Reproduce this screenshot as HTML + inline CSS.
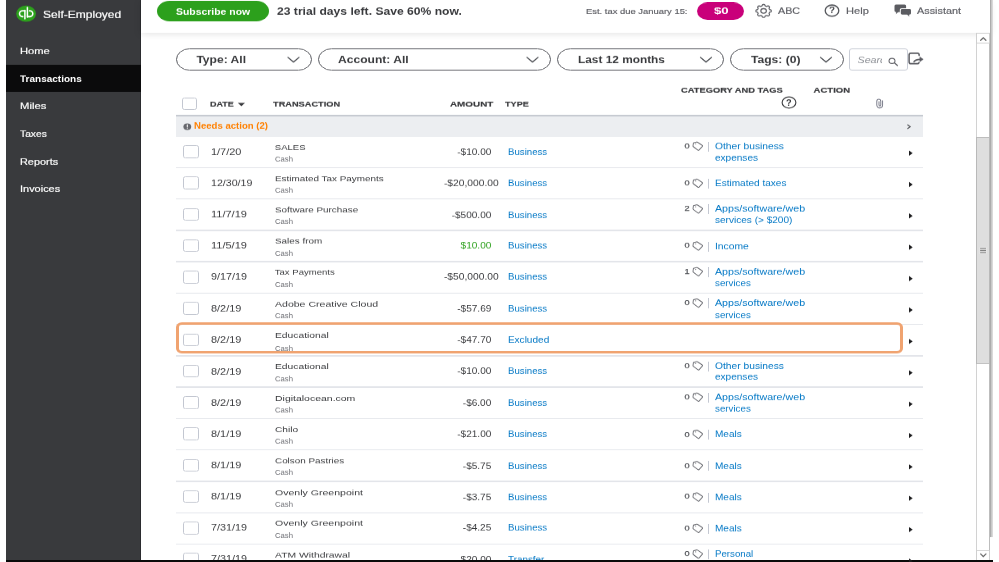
<!DOCTYPE html>
<html lang="en"><head><meta charset="utf-8"><title>Transactions - QuickBooks Self-Employed</title>
<style>
html,body{margin:0;padding:0;background:#fff;}
body{width:999px;height:562px;overflow:hidden;position:relative;font-family:"Liberation Sans",sans-serif;}
#root{will-change:transform;position:absolute;left:0;top:0;width:999px;height:685.37px;transform:scaleY(0.82);transform-origin:0 0;}
#root div{position:absolute;}
#root .t{white-space:nowrap;line-height:1;color:#393a3d;}
#root svg{position:absolute;left:0;top:0;width:999px;height:685.37px;overflow:visible;}
</style></head>
<body>
<div id="root">
<div style="left:6px;top:0px;width:135px;height:683.66px;background:#393a3d;border-right:1px solid #2b2c2f;box-sizing:border-box;"></div>
<div style="left:6px;top:78.54px;width:135px;height:33.66px;background:#0b0b0c;"></div>
<div style="left:141px;top:0px;width:849px;height:39.76px;background:#fff;box-shadow:0 2px 8px rgba(0,0,0,.11);"></div>
<div class="t" style="top:12px;font-size:12.6px;left:42.5px;color:#fff;-webkit-text-stroke:0.22px #fff;transform:scaleX(0.955);transform-origin:left 50%;">Self-Employed</div>
<div class="t" style="top:56px;font-size:11.75px;left:19.8px;color:#fff;-webkit-text-stroke:0.22px #fff;transform:scaleX(0.951);transform-origin:left 50%;">Home</div>
<div class="t" style="top:90px;font-size:11.75px;left:19.8px;font-weight:700;color:#fff;transform:scaleX(0.852);transform-origin:left 50%;">Transactions</div>
<div class="t" style="top:123px;font-size:11.75px;left:19.8px;color:#fff;-webkit-text-stroke:0.22px #fff;transform:scaleX(0.959);transform-origin:left 50%;">Miles</div>
<div class="t" style="top:157px;font-size:11.75px;left:19.8px;color:#fff;-webkit-text-stroke:0.22px #fff;transform:scaleX(0.873);transform-origin:left 50%;">Taxes</div>
<div class="t" style="top:191px;font-size:11.75px;left:19.8px;color:#fff;-webkit-text-stroke:0.22px #fff;transform:scaleX(0.926);transform-origin:left 50%;">Reports</div>
<div class="t" style="top:224px;font-size:11.75px;left:19.8px;color:#fff;-webkit-text-stroke:0.22px #fff;transform:scaleX(0.932);transform-origin:left 50%;">Invoices</div>
<div style="left:157px;top:1.22px;width:112px;height:24.39px;background:#2ca01c;border-radius:999px;"></div>
<div class="t" style="top:9px;font-size:11.41px;left:175.8px;font-weight:700;color:#fff;transform:scaleX(0.914);transform-origin:left 50%;">Subscribe now</div>
<div class="t" style="top:8px;font-size:12.43px;left:277px;font-weight:700;transform:scaleX(0.976);transform-origin:left 50%;">23 trial days left. Save 60% now.</div>
<div class="t" style="top:9px;font-size:9.88px;left:585.6px;color:#5d5e64;-webkit-text-stroke:0.2px #5d5e64;transform:scaleX(0.953);transform-origin:left 50%;">Est. tax due January 15:</div>
<div style="left:696.8px;top:2.68px;width:47px;height:21.22px;background:#c9007a;border-radius:999px;"></div>
<div class="t" style="top:8px;font-size:11.24px;left:713.5px;font-weight:700;color:#fff;transform:scaleX(1.176);transform-origin:left 50%;">$0</div>
<div class="t" style="top:8px;font-size:11.07px;left:777.6px;color:#5d5e64;-webkit-text-stroke:0.2px #5d5e64;transform:scaleX(0.971);transform-origin:left 50%;">ABC</div>
<div class="t" style="top:8px;font-size:11.58px;left:846.2px;color:#5d5e64;-webkit-text-stroke:0.2px #5d5e64;transform:scaleX(0.957);transform-origin:left 50%;">Help</div>
<div class="t" style="top:8px;font-size:11.58px;left:917.4px;color:#5d5e64;-webkit-text-stroke:0.2px #5d5e64;transform:scaleX(0.936);transform-origin:left 50%;">Assistant</div>
<div class="t" style="top:7px;font-size:11.58px;left:829px;font-weight:700;color:#4a4b50;transform:scaleX(0.848);transform-origin:left 50%;">?</div>
<div style="left:175.6px;top:58.66px;width:136.7px;height:27.8px;border:1.6px solid #595a60;border-radius:999px;box-sizing:border-box;background:#fff;"></div>
<div class="t" style="top:67px;font-size:12.09px;left:196.4px;font-weight:700;">Type: All</div>
<div style="left:318px;top:58.66px;width:233.4px;height:27.8px;border:1.6px solid #595a60;border-radius:999px;box-sizing:border-box;background:#fff;"></div>
<div class="t" style="top:67px;font-size:12.09px;left:338px;font-weight:700;">Account: All</div>
<div style="left:556.8px;top:58.66px;width:167.2px;height:27.8px;border:1.6px solid #595a60;border-radius:999px;box-sizing:border-box;background:#fff;"></div>
<div class="t" style="top:67px;font-size:12.09px;left:578px;font-weight:700;transform:scaleX(0.981);transform-origin:left 50%;">Last 12 months</div>
<div style="left:730px;top:58.66px;width:114px;height:27.8px;border:1.6px solid #595a60;border-radius:999px;box-sizing:border-box;background:#fff;"></div>
<div class="t" style="top:67px;font-size:12.09px;left:751px;font-weight:700;">Tags: (0)</div>
<div style="left:849.2px;top:58.54px;width:59.3px;height:27.44px;border:1px solid #c9cdd6;border-radius:3px;box-sizing:border-box;background:#fff;"></div>
<div class="t" style="top:68px;font-size:10.7px;left:857.5px;font-style:italic;color:#8d9096;width:24.4px;overflow:hidden;">Search</div>
<div style="left:182px;top:119.39px;width:15.3px;height:14.76px;border:1px solid #c3c7d1;border-radius:2.5px;box-sizing:border-box;background:#fff;"></div>
<div class="t" style="top:122px;font-size:9.54px;left:209.5px;font-weight:700;-webkit-text-stroke:0.2px #393a3d;transform:scaleX(0.942);transform-origin:left 50%;">DATE</div>
<div class="t" style="top:122px;font-size:9.54px;left:273.3px;font-weight:700;-webkit-text-stroke:0.2px #393a3d;transform:scaleX(0.968);transform-origin:left 50%;">TRANSACTION</div>
<div class="t" style="top:122px;font-size:9.54px;left:450px;font-weight:700;-webkit-text-stroke:0.2px #393a3d;transform:scaleX(1.035);transform-origin:left 50%;">AMOUNT</div>
<div class="t" style="top:122px;font-size:9.54px;left:505.4px;font-weight:700;-webkit-text-stroke:0.2px #393a3d;transform:scaleX(0.955);transform-origin:left 50%;">TYPE</div>
<div class="t" style="top:105px;font-size:9.54px;left:681.4px;font-weight:700;-webkit-text-stroke:0.2px #393a3d;transform:scaleX(0.977);transform-origin:left 50%;">CATEGORY AND TAGS</div>
<div class="t" style="top:105px;font-size:9.54px;left:813.6px;font-weight:700;-webkit-text-stroke:0.2px #393a3d;">ACTION</div>
<div class="t" style="top:120px;font-size:11.24px;left:786.2px;font-weight:700;transform:scaleX(0.816);transform-origin:left 50%;">?</div>
<div style="left:175.8px;top:141.46px;width:747.2px;height:25.12px;background:#eceef1;"></div>
<div style="left:175.8px;top:140.12px;width:747.2px;height:1.95px;background:#c6cad1;"></div>
<div class="t" style="top:149px;font-size:10.05px;left:194px;font-weight:700;color:#ff8000;transform:scaleX(0.953);transform-origin:left 50%;">Needs action (2)</div>
<div style="left:175.8px;top:203.65px;width:747.2px;height:1.34px;background:#e3e5ea;"></div>
<div style="left:183.1px;top:176.98px;width:15.7px;height:15.61px;border:1px solid #c3c7d1;border-radius:2.5px;box-sizing:border-box;background:#fff;"></div>
<div class="t" style="top:181px;font-size:10.22px;left:211.2px;transform:scaleX(1.070);transform-origin:left 50%;">1/7/20</div>
<div class="t" style="top:175px;font-size:9.54px;left:274.8px;">SALES</div>
<div class="t" style="top:190px;font-size:8.52px;left:274.9px;color:#6b6c72;transform:scaleX(0.905);transform-origin:left 50%;">Cash</div>
<div class="t" style="top:181px;font-size:10.05px;right:507.7px;">-$10.00</div>
<div class="t" style="top:181px;font-size:10.05px;left:507.9px;color:#0077c5;transform:scaleX(0.961);transform-origin:left 50%;">Business</div>
<div class="t" style="top:174px;font-size:9.2px;left:684.4px;color:#4f5156;-webkit-text-stroke:0.25px #4f5156;">0</div>
<div style="left:708.1px;top:172.83px;width:0.9px;height:11.95px;background:#c4c8d2;"></div>
<div class="t" style="top:174px;font-size:10.05px;left:715px;color:#0077c5;transform:scaleX(1.021);transform-origin:left 50%;">Other business</div>
<div class="t" style="top:188px;font-size:10.05px;left:715px;color:#0077c5;">expenses</div>
<div style="left:175.8px;top:241.91px;width:747.2px;height:1.34px;background:#e3e5ea;"></div>
<div style="left:183.1px;top:215.24px;width:15.7px;height:15.61px;border:1px solid #c3c7d1;border-radius:2.5px;box-sizing:border-box;background:#fff;"></div>
<div class="t" style="top:219px;font-size:10.22px;left:211.2px;transform:scaleX(1.041);transform-origin:left 50%;">12/30/19</div>
<div class="t" style="top:213px;font-size:9.54px;left:274.8px;transform:scaleX(1.038);transform-origin:left 50%;">Estimated Tax Payments</div>
<div class="t" style="top:228px;font-size:8.52px;left:274.9px;color:#6b6c72;transform:scaleX(0.905);transform-origin:left 50%;">Cash</div>
<div class="t" style="top:219px;font-size:10.05px;right:500.2px;transform:scaleX(1.020);transform-origin:right 50%;">-$20,000.00</div>
<div class="t" style="top:219px;font-size:10.05px;left:507.9px;color:#0077c5;transform:scaleX(0.961);transform-origin:left 50%;">Business</div>
<div class="t" style="top:219px;font-size:9.2px;left:684.4px;color:#4f5156;-webkit-text-stroke:0.25px #4f5156;">0</div>
<div style="left:708.1px;top:218.04px;width:0.9px;height:11.95px;background:#c4c8d2;"></div>
<div class="t" style="top:219px;font-size:10.05px;left:715px;color:#0077c5;">Estimated taxes</div>
<div style="left:175.8px;top:280.18px;width:747.2px;height:1.34px;background:#e3e5ea;"></div>
<div style="left:183.1px;top:253.5px;width:15.7px;height:15.61px;border:1px solid #c3c7d1;border-radius:2.5px;box-sizing:border-box;background:#fff;"></div>
<div class="t" style="top:257px;font-size:10.22px;left:211.2px;transform:scaleX(1.077);transform-origin:left 50%;">11/7/19</div>
<div class="t" style="top:251px;font-size:9.54px;left:274.8px;transform:scaleX(1.032);transform-origin:left 50%;">Software Purchase</div>
<div class="t" style="top:266px;font-size:8.52px;left:274.9px;color:#6b6c72;transform:scaleX(0.905);transform-origin:left 50%;">Cash</div>
<div class="t" style="top:258px;font-size:10.05px;right:507.7px;">-$500.00</div>
<div class="t" style="top:258px;font-size:10.05px;left:507.9px;color:#0077c5;transform:scaleX(0.961);transform-origin:left 50%;">Business</div>
<div class="t" style="top:250px;font-size:9.2px;left:684.4px;color:#4f5156;-webkit-text-stroke:0.25px #4f5156;">2</div>
<div style="left:708.1px;top:249.35px;width:0.9px;height:11.95px;background:#c4c8d2;"></div>
<div class="t" style="top:250px;font-size:10.05px;left:715px;color:#0077c5;transform:scaleX(1.061);transform-origin:left 50%;">Apps/software/web</div>
<div class="t" style="top:264px;font-size:10.05px;left:715px;color:#0077c5;">services (&gt; $200)</div>
<div style="left:175.8px;top:318.44px;width:747.2px;height:1.34px;background:#e3e5ea;"></div>
<div style="left:183.1px;top:291.76px;width:15.7px;height:15.61px;border:1px solid #c3c7d1;border-radius:2.5px;box-sizing:border-box;background:#fff;"></div>
<div class="t" style="top:295px;font-size:10.22px;left:211.2px;transform:scaleX(1.077);transform-origin:left 50%;">11/5/19</div>
<div class="t" style="top:289px;font-size:9.54px;left:274.8px;transform:scaleX(1.035);transform-origin:left 50%;">Sales from</div>
<div class="t" style="top:305px;font-size:8.52px;left:274.9px;color:#6b6c72;transform:scaleX(0.905);transform-origin:left 50%;">Cash</div>
<div class="t" style="top:295px;font-size:10.05px;right:507.7px;color:#2ca01c;">$10.00</div>
<div class="t" style="top:295px;font-size:10.05px;left:507.9px;color:#0077c5;transform:scaleX(0.961);transform-origin:left 50%;">Business</div>
<div class="t" style="top:295px;font-size:9.2px;left:684.4px;color:#4f5156;-webkit-text-stroke:0.25px #4f5156;">0</div>
<div style="left:708.1px;top:294.57px;width:0.9px;height:11.95px;background:#c4c8d2;"></div>
<div class="t" style="top:296px;font-size:10.05px;left:715px;color:#0077c5;transform:scaleX(1.026);transform-origin:left 50%;">Income</div>
<div style="left:175.8px;top:356.7px;width:747.2px;height:1.34px;background:#e3e5ea;"></div>
<div style="left:183.1px;top:330.02px;width:15.7px;height:15.61px;border:1px solid #c3c7d1;border-radius:2.5px;box-sizing:border-box;background:#fff;"></div>
<div class="t" style="top:333px;font-size:10.22px;left:211.2px;transform:scaleX(1.053);transform-origin:left 50%;">9/17/19</div>
<div class="t" style="top:327px;font-size:9.54px;left:274.8px;">Tax Payments</div>
<div class="t" style="top:343px;font-size:8.52px;left:274.9px;color:#6b6c72;transform:scaleX(0.905);transform-origin:left 50%;">Cash</div>
<div class="t" style="top:333px;font-size:10.05px;right:500.2px;transform:scaleX(1.020);transform-origin:right 50%;">-$50,000.00</div>
<div class="t" style="top:333px;font-size:10.05px;left:507.9px;color:#0077c5;transform:scaleX(0.961);transform-origin:left 50%;">Business</div>
<div class="t" style="top:327px;font-size:9.2px;left:684.4px;color:#4f5156;-webkit-text-stroke:0.25px #4f5156;">1</div>
<div style="left:708.1px;top:325.88px;width:0.9px;height:11.95px;background:#c4c8d2;"></div>
<div class="t" style="top:327px;font-size:10.05px;left:715px;color:#0077c5;transform:scaleX(1.061);transform-origin:left 50%;">Apps/software/web</div>
<div class="t" style="top:341px;font-size:10.05px;left:715px;color:#0077c5;transform:scaleX(0.971);transform-origin:left 50%;">services</div>
<div style="left:175.8px;top:394.96px;width:747.2px;height:1.34px;background:#e3e5ea;"></div>
<div style="left:183.1px;top:368.29px;width:15.7px;height:15.61px;border:1px solid #c3c7d1;border-radius:2.5px;box-sizing:border-box;background:#fff;"></div>
<div class="t" style="top:372px;font-size:10.22px;left:211.2px;transform:scaleX(1.070);transform-origin:left 50%;">8/2/19</div>
<div class="t" style="top:366px;font-size:9.54px;left:274.8px;transform:scaleX(1.106);transform-origin:left 50%;">Adobe Creative Cloud</div>
<div class="t" style="top:381px;font-size:8.52px;left:274.9px;color:#6b6c72;transform:scaleX(0.905);transform-origin:left 50%;">Cash</div>
<div class="t" style="top:372px;font-size:10.05px;right:507.7px;">-$57.69</div>
<div class="t" style="top:372px;font-size:10.05px;left:507.9px;color:#0077c5;transform:scaleX(0.961);transform-origin:left 50%;">Business</div>
<div class="t" style="top:365px;font-size:9.2px;left:684.4px;color:#4f5156;-webkit-text-stroke:0.25px #4f5156;">0</div>
<div style="left:708.1px;top:364.14px;width:0.9px;height:11.95px;background:#c4c8d2;"></div>
<div class="t" style="top:365px;font-size:10.05px;left:715px;color:#0077c5;transform:scaleX(1.061);transform-origin:left 50%;">Apps/software/web</div>
<div class="t" style="top:380px;font-size:10.05px;left:715px;color:#0077c5;transform:scaleX(0.971);transform-origin:left 50%;">services</div>
<div style="left:175.8px;top:433.23px;width:747.2px;height:1.34px;background:#e3e5ea;"></div>
<div style="left:183.1px;top:406.55px;width:15.7px;height:15.61px;border:1px solid #c3c7d1;border-radius:2.5px;box-sizing:border-box;background:#fff;"></div>
<div class="t" style="top:410px;font-size:10.22px;left:211.2px;transform:scaleX(1.070);transform-origin:left 50%;">8/2/19</div>
<div class="t" style="top:404px;font-size:9.54px;left:274.8px;transform:scaleX(1.079);transform-origin:left 50%;">Educational</div>
<div class="t" style="top:421px;font-size:8.52px;left:274.9px;color:#6b6c72;transform:scaleX(0.905);transform-origin:left 50%;">Cash</div>
<div class="t" style="top:410px;font-size:10.05px;right:507.7px;">-$47.70</div>
<div class="t" style="top:410px;font-size:10.05px;left:507.9px;color:#0077c5;">Excluded</div>
<div style="left:175.8px;top:471.49px;width:747.2px;height:1.34px;background:#e3e5ea;"></div>
<div style="left:183.1px;top:444.81px;width:15.7px;height:15.61px;border:1px solid #c3c7d1;border-radius:2.5px;box-sizing:border-box;background:#fff;"></div>
<div class="t" style="top:449px;font-size:10.22px;left:211.2px;transform:scaleX(1.070);transform-origin:left 50%;">8/2/19</div>
<div class="t" style="top:442px;font-size:9.54px;left:274.8px;transform:scaleX(1.079);transform-origin:left 50%;">Educational</div>
<div class="t" style="top:458px;font-size:8.52px;left:274.9px;color:#6b6c72;transform:scaleX(0.905);transform-origin:left 50%;">Cash</div>
<div class="t" style="top:448px;font-size:10.05px;right:507.7px;">-$10.00</div>
<div class="t" style="top:448px;font-size:10.05px;left:507.9px;color:#0077c5;transform:scaleX(0.961);transform-origin:left 50%;">Business</div>
<div class="t" style="top:442px;font-size:9.2px;left:684.4px;color:#4f5156;-webkit-text-stroke:0.25px #4f5156;">0</div>
<div style="left:708.1px;top:440.66px;width:0.9px;height:11.95px;background:#c4c8d2;"></div>
<div class="t" style="top:442px;font-size:10.05px;left:715px;color:#0077c5;transform:scaleX(1.021);transform-origin:left 50%;">Other business</div>
<div class="t" style="top:455px;font-size:10.05px;left:715px;color:#0077c5;">expenses</div>
<div style="left:175.8px;top:509.75px;width:747.2px;height:1.34px;background:#e3e5ea;"></div>
<div style="left:183.1px;top:483.07px;width:15.7px;height:15.61px;border:1px solid #c3c7d1;border-radius:2.5px;box-sizing:border-box;background:#fff;"></div>
<div class="t" style="top:487px;font-size:10.22px;left:211.2px;transform:scaleX(1.070);transform-origin:left 50%;">8/2/19</div>
<div class="t" style="top:481px;font-size:9.54px;left:274.8px;transform:scaleX(1.099);transform-origin:left 50%;">Digitalocean.com</div>
<div class="t" style="top:496px;font-size:8.52px;left:274.9px;color:#6b6c72;transform:scaleX(0.905);transform-origin:left 50%;">Cash</div>
<div class="t" style="top:487px;font-size:10.05px;right:507.7px;">-$6.00</div>
<div class="t" style="top:487px;font-size:10.05px;left:507.9px;color:#0077c5;transform:scaleX(0.961);transform-origin:left 50%;">Business</div>
<div class="t" style="top:480px;font-size:9.2px;left:684.4px;color:#4f5156;-webkit-text-stroke:0.25px #4f5156;">0</div>
<div style="left:708.1px;top:478.93px;width:0.9px;height:11.95px;background:#c4c8d2;"></div>
<div class="t" style="top:480px;font-size:10.05px;left:715px;color:#0077c5;transform:scaleX(1.061);transform-origin:left 50%;">Apps/software/web</div>
<div class="t" style="top:494px;font-size:10.05px;left:715px;color:#0077c5;transform:scaleX(0.971);transform-origin:left 50%;">services</div>
<div style="left:175.8px;top:548.01px;width:747.2px;height:1.34px;background:#e3e5ea;"></div>
<div style="left:183.1px;top:521.34px;width:15.7px;height:15.61px;border:1px solid #c3c7d1;border-radius:2.5px;box-sizing:border-box;background:#fff;"></div>
<div class="t" style="top:525px;font-size:10.22px;left:211.2px;transform:scaleX(1.070);transform-origin:left 50%;">8/1/19</div>
<div class="t" style="top:519px;font-size:9.54px;left:274.8px;transform:scaleX(1.067);transform-origin:left 50%;">Chilo</div>
<div class="t" style="top:534px;font-size:8.52px;left:274.9px;color:#6b6c72;transform:scaleX(0.905);transform-origin:left 50%;">Cash</div>
<div class="t" style="top:525px;font-size:10.05px;right:507.7px;">-$21.00</div>
<div class="t" style="top:525px;font-size:10.05px;left:507.9px;color:#0077c5;transform:scaleX(0.961);transform-origin:left 50%;">Business</div>
<div class="t" style="top:526px;font-size:9.2px;left:684.4px;color:#4f5156;-webkit-text-stroke:0.25px #4f5156;">0</div>
<div style="left:708.1px;top:524.14px;width:0.9px;height:11.95px;background:#c4c8d2;"></div>
<div class="t" style="top:525px;font-size:10.05px;left:715px;color:#0077c5;">Meals</div>
<div style="left:175.8px;top:586.27px;width:747.2px;height:1.34px;background:#e3e5ea;"></div>
<div style="left:183.1px;top:559.6px;width:15.7px;height:15.61px;border:1px solid #c3c7d1;border-radius:2.5px;box-sizing:border-box;background:#fff;"></div>
<div class="t" style="top:563px;font-size:10.22px;left:211.2px;transform:scaleX(1.070);transform-origin:left 50%;">8/1/19</div>
<div class="t" style="top:557px;font-size:9.54px;left:274.8px;transform:scaleX(1.036);transform-origin:left 50%;">Colson Pastries</div>
<div class="t" style="top:572px;font-size:8.52px;left:274.9px;color:#6b6c72;transform:scaleX(0.905);transform-origin:left 50%;">Cash</div>
<div class="t" style="top:564px;font-size:10.05px;right:507.7px;">-$5.75</div>
<div class="t" style="top:564px;font-size:10.05px;left:507.9px;color:#0077c5;transform:scaleX(0.961);transform-origin:left 50%;">Business</div>
<div class="t" style="top:564px;font-size:9.2px;left:684.4px;color:#4f5156;-webkit-text-stroke:0.25px #4f5156;">0</div>
<div style="left:708.1px;top:562.4px;width:0.9px;height:11.95px;background:#c4c8d2;"></div>
<div class="t" style="top:564px;font-size:10.05px;left:715px;color:#0077c5;">Meals</div>
<div style="left:175.8px;top:624.54px;width:747.2px;height:1.34px;background:#e3e5ea;"></div>
<div style="left:183.1px;top:597.86px;width:15.7px;height:15.61px;border:1px solid #c3c7d1;border-radius:2.5px;box-sizing:border-box;background:#fff;"></div>
<div class="t" style="top:601px;font-size:10.22px;left:211.2px;transform:scaleX(1.070);transform-origin:left 50%;">8/1/19</div>
<div class="t" style="top:596px;font-size:9.54px;left:274.8px;transform:scaleX(1.107);transform-origin:left 50%;">Ovenly Greenpoint</div>
<div class="t" style="top:611px;font-size:8.52px;left:274.9px;color:#6b6c72;transform:scaleX(0.905);transform-origin:left 50%;">Cash</div>
<div class="t" style="top:602px;font-size:10.05px;right:507.7px;">-$3.75</div>
<div class="t" style="top:602px;font-size:10.05px;left:507.9px;color:#0077c5;transform:scaleX(0.961);transform-origin:left 50%;">Business</div>
<div class="t" style="top:601px;font-size:9.2px;left:684.4px;color:#4f5156;-webkit-text-stroke:0.25px #4f5156;">0</div>
<div style="left:708.1px;top:600.66px;width:0.9px;height:11.95px;background:#c4c8d2;"></div>
<div class="t" style="top:602px;font-size:10.05px;left:715px;color:#0077c5;">Meals</div>
<div style="left:175.8px;top:662.8px;width:747.2px;height:1.34px;background:#e3e5ea;"></div>
<div style="left:183.1px;top:636.12px;width:15.7px;height:15.61px;border:1px solid #c3c7d1;border-radius:2.5px;box-sizing:border-box;background:#fff;"></div>
<div class="t" style="top:639px;font-size:10.22px;left:211.2px;transform:scaleX(1.053);transform-origin:left 50%;">7/31/19</div>
<div class="t" style="top:633px;font-size:9.54px;left:274.8px;transform:scaleX(1.107);transform-origin:left 50%;">Ovenly Greenpoint</div>
<div class="t" style="top:649px;font-size:8.52px;left:274.9px;color:#6b6c72;transform:scaleX(0.905);transform-origin:left 50%;">Cash</div>
<div class="t" style="top:639px;font-size:10.05px;right:507.7px;">-$4.25</div>
<div class="t" style="top:639px;font-size:10.05px;left:507.9px;color:#0077c5;transform:scaleX(0.961);transform-origin:left 50%;">Business</div>
<div class="t" style="top:640px;font-size:9.2px;left:684.4px;color:#4f5156;-webkit-text-stroke:0.25px #4f5156;">0</div>
<div style="left:708.1px;top:638.93px;width:0.9px;height:11.95px;background:#c4c8d2;"></div>
<div class="t" style="top:640px;font-size:10.05px;left:715px;color:#0077c5;">Meals</div>
<div style="left:175.8px;top:701.06px;width:747.2px;height:1.34px;background:#e3e5ea;"></div>
<div style="left:183.1px;top:674.38px;width:15.7px;height:15.61px;border:1px solid #c3c7d1;border-radius:2.5px;box-sizing:border-box;background:#fff;"></div>
<div class="t" style="top:677px;font-size:10.22px;left:211.2px;transform:scaleX(1.053);transform-origin:left 50%;">7/31/19</div>
<div class="t" style="top:672px;font-size:9.54px;left:274.8px;transform:scaleX(1.086);transform-origin:left 50%;">ATM Withdrawal</div>
<div class="t" style="top:687px;font-size:8.52px;left:274.9px;color:#6b6c72;transform:scaleX(0.905);transform-origin:left 50%;">Cash</div>
<div class="t" style="top:678px;font-size:10.05px;right:507.7px;">-$20.00</div>
<div class="t" style="top:678px;font-size:10.05px;left:507.9px;color:#0077c5;transform:scaleX(0.980);transform-origin:left 50%;">Transfer</div>
<div class="t" style="top:671px;font-size:9.2px;left:684.4px;color:#4f5156;-webkit-text-stroke:0.25px #4f5156;">0</div>
<div style="left:708.1px;top:670.24px;width:0.9px;height:11.95px;background:#c4c8d2;"></div>
<div class="t" style="top:671px;font-size:10.05px;left:715px;color:#0077c5;transform:scaleX(0.963);transform-origin:left 50%;">Personal</div>
<div class="hl" style="left:176px;top:392.89px;width:727px;height:38.17px;border:3px solid #f0a370;border-radius:6px;box-sizing:border-box;"></div>
<div style="left:976.4px;top:40.24px;width:13.6px;height:643.41px;background:#fff;border-left:1px solid #d2d2d2;border-right:1px solid #bdbdbd;box-sizing:border-box;"></div>
<div style="left:976.4px;top:40.24px;width:13.6px;height:12.56px;border:1px solid #cfcfcf;box-sizing:border-box;background:#fff;"></div>
<div style="left:976.4px;top:671.22px;width:13.6px;height:12.44px;border:1px solid #cfcfcf;box-sizing:border-box;background:#fff;"></div>
<div style="left:976.4px;top:167.07px;width:13.6px;height:276.83px;background:#dedede;border:1px solid #b9b9b9;box-sizing:border-box;"></div>
<div style="left:989.6px;top:0px;width:3.4px;height:654.88px;background:linear-gradient(90deg,#9c9c9c,#c4c4c4 40%,#e2e2e2);"></div>
<div style="left:6px;top:683.17px;width:987px;height:2.8px;background:#0a0a0a;"></div>
<svg viewBox="0 0 999 562" preserveAspectRatio="none">
<ellipse cx="26.1" cy="13.7" rx="9.9" ry="8.1" fill="#2ca01c"/>
<g fill="none" stroke="#fff" stroke-width="1.5" stroke-linecap="round"><path d="M24.7 10.8 H22.5 a3 2.9 0 0 0 0 5.8 H22.8"/><path d="M24.9 10.4 V18.7"/><path d="M27.6 16.6 H29.8 a3 2.9 0 0 0 0 -5.8 H29.5"/><path d="M27.4 7.6 V17.0"/></g>
<path d="M771.30 10.90 L771.29 11.15 L771.25 11.40 L771.16 11.64 L770.91 11.86 L770.40 12.02 L769.88 12.15 L769.62 12.31 L769.48 12.49 L769.38 12.67 L769.29 12.86 L769.20 13.05 L769.11 13.23 L769.05 13.44 L769.11 13.71 L769.36 14.10 L769.58 14.51 L769.58 14.82 L769.44 15.04 L769.25 15.24 L769.04 15.43 L768.82 15.60 L768.58 15.75 L768.31 15.87 L767.95 15.87 L767.45 15.69 L766.98 15.48 L766.65 15.43 L766.41 15.48 L766.18 15.55 L765.96 15.63 L765.73 15.71 L765.51 15.79 L765.30 15.90 L765.11 16.12 L764.95 16.55 L764.76 16.97 L764.49 17.18 L764.20 17.26 L763.90 17.29 L763.60 17.30 L763.30 17.29 L763.00 17.26 L762.71 17.18 L762.44 16.97 L762.25 16.55 L762.09 16.12 L761.90 15.90 L761.69 15.79 L761.47 15.71 L761.24 15.63 L761.02 15.55 L760.79 15.48 L760.55 15.43 L760.22 15.48 L759.75 15.69 L759.25 15.87 L758.89 15.87 L758.62 15.75 L758.38 15.60 L758.16 15.43 L757.95 15.24 L757.76 15.04 L757.62 14.82 L757.62 14.51 L757.84 14.10 L758.09 13.71 L758.15 13.44 L758.09 13.23 L758.00 13.05 L757.91 12.86 L757.82 12.67 L757.72 12.49 L757.58 12.31 L757.32 12.15 L756.80 12.02 L756.29 11.86 L756.04 11.64 L755.95 11.40 L755.91 11.15 L755.90 10.90 L755.91 10.65 L755.95 10.40 L756.04 10.16 L756.29 9.94 L756.80 9.78 L757.32 9.65 L757.58 9.49 L757.72 9.31 L757.82 9.13 L757.91 8.94 L758.00 8.75 L758.09 8.57 L758.15 8.36 L758.09 8.09 L757.84 7.70 L757.62 7.29 L757.62 6.98 L757.76 6.76 L757.95 6.56 L758.16 6.37 L758.38 6.20 L758.62 6.05 L758.89 5.93 L759.25 5.93 L759.75 6.11 L760.22 6.32 L760.55 6.37 L760.79 6.32 L761.02 6.25 L761.24 6.17 L761.47 6.09 L761.69 6.01 L761.90 5.90 L762.09 5.68 L762.25 5.25 L762.44 4.83 L762.71 4.62 L763.00 4.54 L763.30 4.51 L763.60 4.50 L763.90 4.51 L764.20 4.54 L764.49 4.62 L764.76 4.83 L764.95 5.25 L765.11 5.68 L765.30 5.90 L765.51 6.01 L765.73 6.09 L765.96 6.17 L766.18 6.25 L766.41 6.32 L766.65 6.37 L766.98 6.32 L767.45 6.11 L767.95 5.93 L768.31 5.93 L768.58 6.05 L768.82 6.20 L769.04 6.37 L769.25 6.56 L769.44 6.76 L769.58 6.98 L769.58 7.29 L769.36 7.70 L769.11 8.09 L769.05 8.36 L769.11 8.57 L769.20 8.75 L769.29 8.94 L769.38 9.13 L769.48 9.31 L769.62 9.49 L769.88 9.65 L770.40 9.78 L770.91 9.94 L771.16 10.16 L771.25 10.40 L771.29 10.65 Z" fill="none" stroke="#5d5e64" stroke-width="1.1" stroke-linejoin="round"/>
<ellipse cx="763.6" cy="10.9" rx="2.8" ry="2.3" fill="none" stroke="#5d5e64" stroke-width="1.1"/>
<ellipse cx="832" cy="10.6" rx="6.8" ry="5.6" fill="none" stroke="#55575c" stroke-width="1.3"/>
<g fill="#5b5c61"><path d="M896 4.6 h8.6 a1.5 1.3 0 0 1 1.5 1.3 v2.2 h-4.4 a1.9 1.6 0 0 0 -1.9 1.6 v2.3 h-1.6 l-2.4 2.2 l0.5 -2.2 h-0.3 a1.5 1.3 0 0 1 -1.5 -1.3 v-4.8 a1.5 1.3 0 0 1 1.5 -1.3 z"/><path stroke="#fff" stroke-width="0.9" paint-order="stroke" d="M902.2 9 h7.4 a1.4 1.2 0 0 1 1.4 1.2 v3.2 a1.4 1.2 0 0 1 -1.4 1.2 h-0.6 l0.4 2 l-2.3 -2 h-4.9 a1.4 1.2 0 0 1 -1.4 -1.2 v-3.2 a1.4 1.2 0 0 1 1.4 -1.2 z"/></g>
<path d="M288.0 57.4 L293.5 62.0 L299.0 57.4" fill="none" stroke="#55575c" stroke-width="1.2" stroke-linecap="round" stroke-linejoin="round"/>
<path d="M527.0 57.4 L532.5 62.0 L538.0 57.4" fill="none" stroke="#55575c" stroke-width="1.2" stroke-linecap="round" stroke-linejoin="round"/>
<path d="M700.5 57.4 L706.0 62.0 L711.5 57.4" fill="none" stroke="#55575c" stroke-width="1.2" stroke-linecap="round" stroke-linejoin="round"/>
<path d="M820.5 57.4 L826.0 62.0 L831.5 57.4" fill="none" stroke="#55575c" stroke-width="1.2" stroke-linecap="round" stroke-linejoin="round"/>
<ellipse cx="892" cy="60.9" rx="3.0" ry="2.6" fill="none" stroke="#5f6066" stroke-width="1"/><path d="M894.3 62.8 L897.5 65.5" stroke="#5f6066" stroke-width="1.1" stroke-linecap="round"/>
<path d="M919.15 55.3 V54.95 a1.8 1.8 0 0 0 -1.8 -1.8 H910.9 a1.8 1.8 0 0 0 -1.8 1.8 V61.85 a1.8 1.8 0 0 0 1.8 1.8 H917.35 a1.8 1.8 0 0 0 1.7 -1.1" fill="none" stroke="#5a5b61" stroke-width="1.5" stroke-linecap="round"/><path d="M914 61.7 C915.2 59.9 917.5 59.3 920.3 59.3" fill="none" stroke="#5a5b61" stroke-width="1.4" stroke-linecap="round"/><path d="M919.9 56.9 L923.2 59.3 L919.9 61.7 Z" fill="#5a5b61" stroke="#5a5b61" stroke-width="0.5" stroke-linejoin="round"/>
<path d="M237.8 103 h7.2 l-3.6 3.2 z" fill="#393a3d"/>
<ellipse cx="789" cy="102.5" rx="6.9" ry="5.6" fill="none" stroke="#393a3d" stroke-width="1.1"/>
<path d="M882.6 100.6 V105 a2.9 2.9 0 0 1 -5.8 0 V101.2 a2 2 0 0 1 4 0 V105 a0.9 0.9 0 0 1 -1.8 0 V101.6" fill="none" stroke="#6f7180" stroke-width="0.9" stroke-linecap="round"/>
<ellipse cx="187.3" cy="126.7" rx="3.9" ry="3.2" fill="#67686e"/><path d="M187.3 124.8 V127" stroke="#fff" stroke-width="1" stroke-linecap="round"/><ellipse cx="187.3" cy="128.4" rx="0.55" ry="0.5" fill="#fff"/>
<path d="M907.4 124.6 L910.2 126.7 L907.4 128.8" fill="none" stroke="#55575c" stroke-width="1.1"/>
<path d="M693.40 142.92 l3.2 -0.9 a1.2 1 0 0 1 1 0.2 l4.6 3.1 a0.8 0.7 0 0 1 0.1 1.1 l-3.2 3.6 a0.9 0.8 0 0 1 -1.2 0.1 l-4.4 -3.3 a1.2 1 0 0 1 -0.5 -0.9 z" fill="none" stroke="#6b6c72" stroke-width="0.9" stroke-linejoin="round"/>
<ellipse cx="695.70" cy="143.92" rx="0.55" ry="0.5" fill="#6b6c72"/>
<path d="M909 150.52 v5.2 l3.7 -2.6 z" fill="#1c1c1e"/>
<path d="M693.40 180.00 l3.2 -0.9 a1.2 1 0 0 1 1 0.2 l4.6 3.1 a0.8 0.7 0 0 1 0.1 1.1 l-3.2 3.6 a0.9 0.8 0 0 1 -1.2 0.1 l-4.4 -3.3 a1.2 1 0 0 1 -0.5 -0.9 z" fill="none" stroke="#6b6c72" stroke-width="0.9" stroke-linejoin="round"/>
<ellipse cx="695.70" cy="181.00" rx="0.55" ry="0.5" fill="#6b6c72"/>
<path d="M909 181.90 v5.2 l3.7 -2.6 z" fill="#1c1c1e"/>
<path d="M693.40 205.67 l3.2 -0.9 a1.2 1 0 0 1 1 0.2 l4.6 3.1 a0.8 0.7 0 0 1 0.1 1.1 l-3.2 3.6 a0.9 0.8 0 0 1 -1.2 0.1 l-4.4 -3.3 a1.2 1 0 0 1 -0.5 -0.9 z" fill="none" stroke="#6b6c72" stroke-width="0.9" stroke-linejoin="round"/>
<ellipse cx="695.70" cy="206.67" rx="0.55" ry="0.5" fill="#6b6c72"/>
<path d="M909 213.27 v5.2 l3.7 -2.6 z" fill="#1c1c1e"/>
<path d="M693.40 242.75 l3.2 -0.9 a1.2 1 0 0 1 1 0.2 l4.6 3.1 a0.8 0.7 0 0 1 0.1 1.1 l-3.2 3.6 a0.9 0.8 0 0 1 -1.2 0.1 l-4.4 -3.3 a1.2 1 0 0 1 -0.5 -0.9 z" fill="none" stroke="#6b6c72" stroke-width="0.9" stroke-linejoin="round"/>
<ellipse cx="695.70" cy="243.75" rx="0.55" ry="0.5" fill="#6b6c72"/>
<path d="M909 244.65 v5.2 l3.7 -2.6 z" fill="#1c1c1e"/>
<path d="M693.40 268.42 l3.2 -0.9 a1.2 1 0 0 1 1 0.2 l4.6 3.1 a0.8 0.7 0 0 1 0.1 1.1 l-3.2 3.6 a0.9 0.8 0 0 1 -1.2 0.1 l-4.4 -3.3 a1.2 1 0 0 1 -0.5 -0.9 z" fill="none" stroke="#6b6c72" stroke-width="0.9" stroke-linejoin="round"/>
<ellipse cx="695.70" cy="269.42" rx="0.55" ry="0.5" fill="#6b6c72"/>
<path d="M909 276.02 v5.2 l3.7 -2.6 z" fill="#1c1c1e"/>
<path d="M693.40 299.80 l3.2 -0.9 a1.2 1 0 0 1 1 0.2 l4.6 3.1 a0.8 0.7 0 0 1 0.1 1.1 l-3.2 3.6 a0.9 0.8 0 0 1 -1.2 0.1 l-4.4 -3.3 a1.2 1 0 0 1 -0.5 -0.9 z" fill="none" stroke="#6b6c72" stroke-width="0.9" stroke-linejoin="round"/>
<ellipse cx="695.70" cy="300.80" rx="0.55" ry="0.5" fill="#6b6c72"/>
<path d="M909 307.40 v5.2 l3.7 -2.6 z" fill="#1c1c1e"/>
<path d="M909 338.77 v5.2 l3.7 -2.6 z" fill="#1c1c1e"/>
<path d="M693.40 362.55 l3.2 -0.9 a1.2 1 0 0 1 1 0.2 l4.6 3.1 a0.8 0.7 0 0 1 0.1 1.1 l-3.2 3.6 a0.9 0.8 0 0 1 -1.2 0.1 l-4.4 -3.3 a1.2 1 0 0 1 -0.5 -0.9 z" fill="none" stroke="#6b6c72" stroke-width="0.9" stroke-linejoin="round"/>
<ellipse cx="695.70" cy="363.55" rx="0.55" ry="0.5" fill="#6b6c72"/>
<path d="M909 370.15 v5.2 l3.7 -2.6 z" fill="#1c1c1e"/>
<path d="M693.40 393.92 l3.2 -0.9 a1.2 1 0 0 1 1 0.2 l4.6 3.1 a0.8 0.7 0 0 1 0.1 1.1 l-3.2 3.6 a0.9 0.8 0 0 1 -1.2 0.1 l-4.4 -3.3 a1.2 1 0 0 1 -0.5 -0.9 z" fill="none" stroke="#6b6c72" stroke-width="0.9" stroke-linejoin="round"/>
<ellipse cx="695.70" cy="394.92" rx="0.55" ry="0.5" fill="#6b6c72"/>
<path d="M909 401.52 v5.2 l3.7 -2.6 z" fill="#1c1c1e"/>
<path d="M693.40 431.00 l3.2 -0.9 a1.2 1 0 0 1 1 0.2 l4.6 3.1 a0.8 0.7 0 0 1 0.1 1.1 l-3.2 3.6 a0.9 0.8 0 0 1 -1.2 0.1 l-4.4 -3.3 a1.2 1 0 0 1 -0.5 -0.9 z" fill="none" stroke="#6b6c72" stroke-width="0.9" stroke-linejoin="round"/>
<ellipse cx="695.70" cy="432.00" rx="0.55" ry="0.5" fill="#6b6c72"/>
<path d="M909 432.90 v5.2 l3.7 -2.6 z" fill="#1c1c1e"/>
<path d="M693.40 462.37 l3.2 -0.9 a1.2 1 0 0 1 1 0.2 l4.6 3.1 a0.8 0.7 0 0 1 0.1 1.1 l-3.2 3.6 a0.9 0.8 0 0 1 -1.2 0.1 l-4.4 -3.3 a1.2 1 0 0 1 -0.5 -0.9 z" fill="none" stroke="#6b6c72" stroke-width="0.9" stroke-linejoin="round"/>
<ellipse cx="695.70" cy="463.37" rx="0.55" ry="0.5" fill="#6b6c72"/>
<path d="M909 464.27 v5.2 l3.7 -2.6 z" fill="#1c1c1e"/>
<path d="M693.40 493.75 l3.2 -0.9 a1.2 1 0 0 1 1 0.2 l4.6 3.1 a0.8 0.7 0 0 1 0.1 1.1 l-3.2 3.6 a0.9 0.8 0 0 1 -1.2 0.1 l-4.4 -3.3 a1.2 1 0 0 1 -0.5 -0.9 z" fill="none" stroke="#6b6c72" stroke-width="0.9" stroke-linejoin="round"/>
<ellipse cx="695.70" cy="494.75" rx="0.55" ry="0.5" fill="#6b6c72"/>
<path d="M909 495.65 v5.2 l3.7 -2.6 z" fill="#1c1c1e"/>
<path d="M693.40 525.12 l3.2 -0.9 a1.2 1 0 0 1 1 0.2 l4.6 3.1 a0.8 0.7 0 0 1 0.1 1.1 l-3.2 3.6 a0.9 0.8 0 0 1 -1.2 0.1 l-4.4 -3.3 a1.2 1 0 0 1 -0.5 -0.9 z" fill="none" stroke="#6b6c72" stroke-width="0.9" stroke-linejoin="round"/>
<ellipse cx="695.70" cy="526.12" rx="0.55" ry="0.5" fill="#6b6c72"/>
<path d="M909 527.02 v5.2 l3.7 -2.6 z" fill="#1c1c1e"/>
<path d="M693.40 550.80 l3.2 -0.9 a1.2 1 0 0 1 1 0.2 l4.6 3.1 a0.8 0.7 0 0 1 0.1 1.1 l-3.2 3.6 a0.9 0.8 0 0 1 -1.2 0.1 l-4.4 -3.3 a1.2 1 0 0 1 -0.5 -0.9 z" fill="none" stroke="#6b6c72" stroke-width="0.9" stroke-linejoin="round"/>
<ellipse cx="695.70" cy="551.80" rx="0.55" ry="0.5" fill="#6b6c72"/>
<path d="M909 558.39 v5.2 l3.7 -2.6 z" fill="#1c1c1e"/>
<path d="M980.6 40.3 L983.3 37.8 L986.0 40.3" fill="none" stroke="#555" stroke-width="1.15" stroke-linecap="round" stroke-linejoin="round"/>
<path d="M980.6 554.0 L983.3 556.6 L986.0 554.0" fill="none" stroke="#666" stroke-width="1.15" stroke-linecap="round" stroke-linejoin="round"/>
<rect x="979.6" y="247.2" width="6.9" height="6.8" fill="#ececec"/>
<path d="M980.1 248.50 H986" stroke="#7c7c7c" stroke-width="1"/>
<path d="M980.1 250.50 H986" stroke="#7c7c7c" stroke-width="1"/>
<path d="M980.1 252.50 H986" stroke="#7c7c7c" stroke-width="1"/>
</svg>
</div>
</body></html>
